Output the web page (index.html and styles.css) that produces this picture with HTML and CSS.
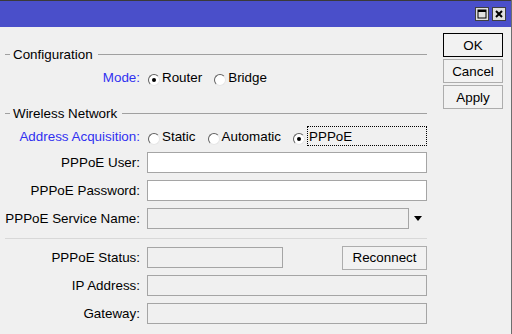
FILE: index.html
```html
<!DOCTYPE html>
<html lang="en">

<head>
    <meta charset="UTF-8">
    <title>PPPoE Setup</title>
    <link rel="stylesheet" href="styles.css">
</head>

<body>
    <div class="window">
        <div class="titlebar">
            <span class="title-btn">
                <svg width="12" height="12" viewBox="0 0 12 12"><rect x="2" y="2" width="8" height="8" fill="none" stroke="#000" stroke-width="1"/><rect x="2" y="2" width="8" height="2" fill="#000"/></svg>
            </span>
            <span class="title-btn">
                <svg width="12" height="12" viewBox="0 0 12 12"><path d="M3 3 L9 9 M9 3 L3 9" stroke="#000" stroke-width="2"/></svg>
            </span>
        </div>

        <div class="main">
            <div class="form">
                <div class="group-title first">Configuration</div>
                <div class="row radio-row">
                    <label class="label blue">Mode:</label>
                    <span class="radio checked"></span><span class="radio-text">Router</span>
                    <span class="radio"></span><span class="radio-text">Bridge</span>
                </div>

                <div class="group-title second">Wireless Network</div>
                <div class="row radio-row addr">
                    <label class="label blue">Address Acquisition:</label>
                    <span class="radio"></span><span class="radio-text">Static</span>
                    <span class="radio"></span><span class="radio-text">Automatic</span>
                    <span class="radio checked"></span><span class="radio-text focus">PPPoE</span>
                </div>

                <div class="row field first-field">
                    <label class="label">PPPoE User:</label>
                    <input type="text" class="input">
                </div>
                <div class="row field">
                    <label class="label">PPPoE Password:</label>
                    <input type="password" class="input">
                </div>
                <div class="row field">
                    <label class="label">PPPoE Service Name:</label>
                    <div class="input disabled service"></div>
                    <span class="arrow"></span>
                </div>

                <div class="separator"></div>

                <div class="row field status-row">
                    <label class="label">PPPoE Status:</label>
                    <div class="input disabled status"></div>
                    <button class="btn reconnect">Reconnect</button>
                </div>
                <div class="row field">
                    <label class="label">IP Address:</label>
                    <div class="input disabled"></div>
                </div>
                <div class="row field">
                    <label class="label">Gateway:</label>
                    <div class="input disabled"></div>
                </div>
            </div>

            <div class="actions">
                <button class="btn default">OK</button>
                <button class="btn">Cancel</button>
                <button class="btn">Apply</button>
            </div>
        </div>
    </div>
</body>

</html>
```

FILE: styles.css
```css
* {
    box-sizing: border-box;
}

body {
    margin: 0;
    font-family: "Liberation Sans", Arial, sans-serif;
    font-size: 13.4px;
    color: #000;
    background-color: #f0f0f0;
}

.window {
    width: 512px;
    height: 334px;
    overflow: hidden;
    border-right: 1px solid #6e6e6e;
}

.titlebar {
    height: 27px;
    background-color: #4a4fca;
    border-top: 1px solid #3a3a3a;
    display: flex;
    justify-content: flex-end;
    align-items: center;
    gap: 3px;
    padding-right: 5px;
}

.title-btn {
    width: 14px;
    height: 14px;
    background-color: #e0e0e0;
    border: 1px solid #404040;
    display: flex;
    align-items: center;
    justify-content: center;
}

.main {
    display: flex;
    padding-left: 5px;
}

.form {
    width: 422px;
}

/* group headers with a line through */
.group-title {
    display: flex;
    align-items: center;
    height: 16px;
    padding: 0;
}

.group-title::before {
    content: "";
    width: 5px;
    height: 1px;
    margin-right: 3px;
    background-color: #a0a0a0;
}

.group-title::after {
    content: "";
    flex: 1;
    height: 1px;
    margin-left: 5px;
    background-color: #a0a0a0;
}

.group-title.first {
    margin-top: 19px;
}

.group-title.second {
    margin-top: 20px;
}

.row {
    display: flex;
    align-items: center;
}

.label {
    width: 135px;
    text-align: right;
    margin-right: 7px;
    white-space: nowrap;
}

.blue {
    color: #3030f0;
}

.radio-row {
    height: 16px;
    margin-top: 7px;
}

.radio-row.addr {
    height: 20px;
    margin-top: 5px;
}

.radio {
    width: 12px;
    height: 12px;
    margin-top: 5px;
    margin-left: 1px;
    border-radius: 50%;
    background-color: #fff;
    border: 1px solid #e6e6e6;
    border-top-color: #606060;
    border-left-color: #606060;
    display: flex;
    align-items: center;
    justify-content: center;
    flex-shrink: 0;
}

.radio.checked::after {
    content: "";
    width: 4px;
    height: 4px;
    border-radius: 50%;
    background-color: #000;
}

.radio-text {
    margin-left: 2px;
    margin-right: 11px;
}

.radio-text.focus {
    flex: 1;
    height: 20px;
    margin-right: 0;
    padding-left: 1px;
    border: 1px dotted #000;
    display: flex;
    align-items: center;
}

.field {
    height: 21px;
    margin-top: 7px;
}

.first-field {
    margin-top: 6px;
}

.input {
    width: 280px;
    height: 21px;
    border: 1px solid #a5a5a5;
    background-color: #fff;
    font-family: inherit;
    font-size: 13px;
    padding: 0 3px;
    margin: 0;
    outline: none;
}

.input.disabled {
    background-color: #f0f0f0;
}

.input.service {
    width: 262px;
}

.arrow {
    margin-left: 5px;
    border-left: 4px solid transparent;
    border-right: 4px solid transparent;
    border-top: 5px solid #000;
}

.separator {
    height: 1px;
    margin-top: 9px;
    background-color: #d8d8d8;
}

.status-row {
    margin-top: 8px;
}

.input.status {
    width: 136px;
}

.btn {
    font-family: inherit;
    font-size: 13.4px;
    color: #000;
    background-color: #f2f2f2;
    border: 1px solid #adadad;
    padding: 0;
    height: 24px;
}

.reconnect {
    width: 85px;
    margin-left: auto;
}

.actions {
    width: 60px;
    margin-left: 16px;
    padding-top: 6px;
    display: flex;
    flex-direction: column;
    gap: 2px;
}

.btn.default {
    border-color: #000;
}
```
